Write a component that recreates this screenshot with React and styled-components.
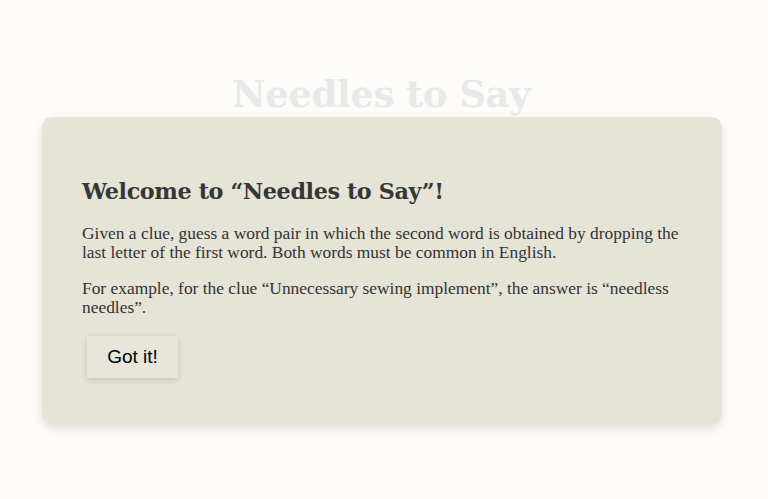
import React from 'react';
import styled, { createGlobalStyle } from 'styled-components';

const GlobalStyle = createGlobalStyle`
  html, body {
    margin: 0;
    padding: 0;
    background: #fdfcf8;
  }
  body {
    font-family: "DejaVu Serif", Georgia, serif;
  }
`;

const Page = styled.div`
  width: 768px;
  height: 499px;
  position: relative;
  overflow: hidden;
  background: #fdfcf8;
`;

const Title = styled.h1`
  margin: 0;
  padding-top: 71px;
  text-align: center;
  font-family: "DejaVu Serif", Georgia, serif;
  font-weight: bold;
  font-size: 37px;
  line-height: 46px;
  color: #e9e9e9;
  letter-spacing: -0.5px;
  transform: translateX(-3px);
`;

const Overlay = styled.div`
  position: absolute;
  left: 42px;
  top: 117px;
  width: 680px;
`;

const Card = styled.div`
  box-sizing: border-box;
  background: #e6e3d7;
  border-radius: 10px;
  box-shadow: 0 4px 10px rgba(0, 0, 0, 0.12);
  padding: 59px 40px 46px 40px;
  color: #333;
`;

const Heading = styled.h2`
  margin: 0 0 18px;
  font-family: "DejaVu Serif", Georgia, serif;
  font-weight: bold;
  font-size: 22.3px;
  line-height: 30px;
  color: #363636;
  letter-spacing: -0.4px;
`;

const Text = styled.p`
  margin: 0 0 17px;
  font-family: "Liberation Serif", Georgia, serif;
  font-size: 17.4px;
  line-height: 19px;
  color: #333;
`;

const Button = styled.button`
  display: block;
  margin: 19px 0 0 5px;
  width: 91px;
  height: 42px;
  border: none;
  background: #e8e5da;
  box-shadow: 0 2px 6px rgba(0, 0, 0, 0.15);
  font-family: "Liberation Sans", Arial, sans-serif;
  font-size: 19px;
  color: #000;
  cursor: pointer;
`;

export default function App() {
  return (
    <Page>
      <GlobalStyle />
      <Title>Needles to Say</Title>
      <Overlay>
        <Card>
          <Heading>Welcome to “Needles to Say”!</Heading>
          <Text>
            Given a clue, guess a word pair in which the second word is obtained by dropping the
            last letter of the first word. Both words must be common in English.
          </Text>
          <Text>
            For example, for the clue “Unnecessary sewing implement”, the answer is “needless
            needles”.
          </Text>
          <Button>Got it!</Button>
        </Card>
      </Overlay>
    </Page>
  );
}
